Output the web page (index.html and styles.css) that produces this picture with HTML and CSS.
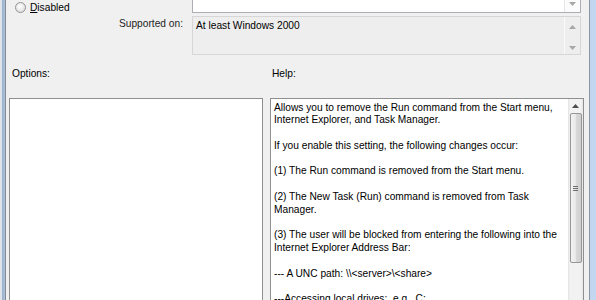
FILE: index.html
```html
<!DOCTYPE html>
<html>
<head>
    <title>Remove Run menu from Start Menu</title>
    <link rel="stylesheet" href="styles.css">
</head>
<body>
    <div class="window">
        <div class="frame-left"></div>

        <div class="content">
            <div class="row-state">
                <label class="radio-opt"><span class="radio"></span><span><u>D</u>isabled</span></label>
                <div class="edit comment">
                    <div class="vscroll">
                        <svg class="arrow" width="7" height="4" viewBox="0 0 7 4"><polygon points="0,0 7,0 3.5,4" /></svg>
                    </div>
                </div>
            </div>

            <div class="row-support">
                <div class="field-label">Supported on:</div>
                <div class="edit readonly">
                    <div class="edit-text">At least Windows 2000</div>
                    <div class="vscroll split">
                        <svg class="arrow" width="7" height="4" viewBox="0 0 7 4"><polygon points="0,4 7,4 3.5,0" /></svg>
                        <svg class="arrow" width="7" height="4" viewBox="0 0 7 4"><polygon points="0,0 7,0 3.5,4" /></svg>
                    </div>
                </div>
            </div>

            <div class="row-labels">
                <div class="pane-label options-label">Options:</div>
                <div class="pane-label">Help:</div>
            </div>

            <div class="row-panes">
                <div class="pane options-pane"></div>
                <div class="pane help-pane">
                    <div class="help-text">
                        <p>Allows you to remove the Run command from the Start menu,<br>Internet Explorer, and Task Manager.</p>
                        <p>If you enable this setting, the following changes occur:</p>
                        <p>(1) The Run command is removed from the Start menu.</p>
                        <p>(2) The New Task (Run) command is removed from Task<br>Manager.</p>
                        <p>(3) The user will be blocked from entering the following into the<br>Internet Explorer Address Bar:</p>
                        <p>--- A UNC path: \\&lt;server&gt;\&lt;share&gt;</p>
                        <p>---Accessing local drives:&nbsp; e.g., C:</p>
                    </div>
                    <div class="scrollbar">
                        <div class="sb-button">
                            <svg width="7" height="4" viewBox="0 0 7 4"><polygon points="0,4 7,4 3.5,0" /></svg>
                        </div>
                        <div class="sb-thumb">
                            <div class="grip"></div>
                        </div>
                    </div>
                </div>
            </div>
        </div>

        <div class="frame-right"></div>
    </div>
</body>
</html>
```

FILE: styles.css
```css
body {
    margin: 0;
    background: #f0f0f0;
    font-family: "Liberation Sans", Arial, sans-serif;
    font-size: 10.2px;
    color: #000;
}
.window {
    display: flex;
    width: 596px;
    height: 300px;
    overflow: hidden;
}
.frame-left {
    width: 6px;
    flex-shrink: 0;
    background: linear-gradient(to right, #dfe4ea 0, #dfe4ea 2px, #98afcb 2px, #b0c3da 5px, #7f8a96 5px);
}
.frame-right {
    width: 7px;
    flex-shrink: 0;
    background: linear-gradient(to right, #8a96a3 0, #8a96a3 1px, #c2d7ef 1px);
}
.content {
    flex: 1;
    background: #f0f0f0;
}

/* top rows */
.row-state {
    display: flex;
    height: 13px;
}
.radio-opt {
    width: 186px;
    box-sizing: border-box;
    padding-left: 9px;
    display: flex;
    align-items: center;
    gap: 4px;
    margin-top: 1px;
}
.radio {
    width: 11px;
    height: 11px;
    box-sizing: border-box;
    border-radius: 50%;
    border: 1px solid #939393;
    background: radial-gradient(circle at 45% 40%, #ffffff 0, #f0f0f0 35%, #d4d4d4 100%);
}
.edit {
    width: 389px;
    box-sizing: border-box;
    display: flex;
}
.comment {
    height: 13px;
    background: #fff;
    border: 1px solid #abadb3;
    border-top: none;
}
.vscroll {
    margin-left: auto;
    width: 15px;
    border-left: 1px solid #e6e6e6;
    display: flex;
    flex-direction: column;
    align-items: center;
    padding-top: 2px;
}
.comment .vscroll {
    background: #fbfbfb;
}
.arrow polygon {
    fill: #a7a7a7;
}
.row-support {
    display: flex;
    margin-top: 3px;
}
.field-label {
    width: 177px;
    margin-right: 9px;
    text-align: right;
    padding-top: 2px;
    color: #1e1e1e;
}
.readonly {
    height: 39px;
    background: #eeeeee;
    border: 1px solid #d6d6d6;
}
.edit-text {
    padding: 2px 3px;
    line-height: 13px;
}
.vscroll.split {
    justify-content: space-between;
    padding: 8px 0 4px;
    border-left: 1px solid #fafafa;
}

/* labels */
.row-labels {
    display: flex;
    margin-top: 12px;
    height: 13px;
    line-height: 13px;
}
.options-label {
    width: 266px;
    box-sizing: border-box;
    padding-left: 6px;
}

/* panes */
.row-panes {
    display: flex;
    margin-top: 18px;
    padding-left: 3px;
}
.pane {
    height: 230px;
    box-sizing: border-box;
    background: #fff;
    border: 1px solid #8e8f8f;
}
.options-pane {
    width: 254px;
    margin-right: 7px;
}
.help-pane {
    width: 314px;
    display: flex;
}
.help-text {
    flex: 1;
    padding: 2.5px 3px;
    line-height: 12.8px;
    white-space: nowrap;
    overflow: hidden;
}
.help-text p {
    margin: 0 0 12.8px;
}
.scrollbar {
    width: 15px;
    flex-shrink: 0;
    background: linear-gradient(to right, #e2e2e2 0, #f2f2f2 2px, #f2f2f2 13px, #e6e6e6 15px);
    display: flex;
    flex-direction: column;
    align-items: center;
}
.sb-button {
    height: 14px;
    display: flex;
    align-items: center;
    justify-content: center;
}
.sb-button polygon {
    fill: #4d4d4d;
}
.sb-thumb {
    width: 12px;
    height: 150px;
    box-sizing: border-box;
    border: 1px solid #979797;
    border-radius: 2px;
    background: linear-gradient(to right, #f3f3f3 0, #e9e9e9 45%, #d8d8d8 55%, #cfcfcf 100%);
    display: flex;
    align-items: center;
    justify-content: center;
}
.grip {
    width: 5px;
    height: 5px;
    background: repeating-linear-gradient(to bottom, #6f6f6f 0, #6f6f6f 1px, transparent 1px, transparent 2px);
}
```
